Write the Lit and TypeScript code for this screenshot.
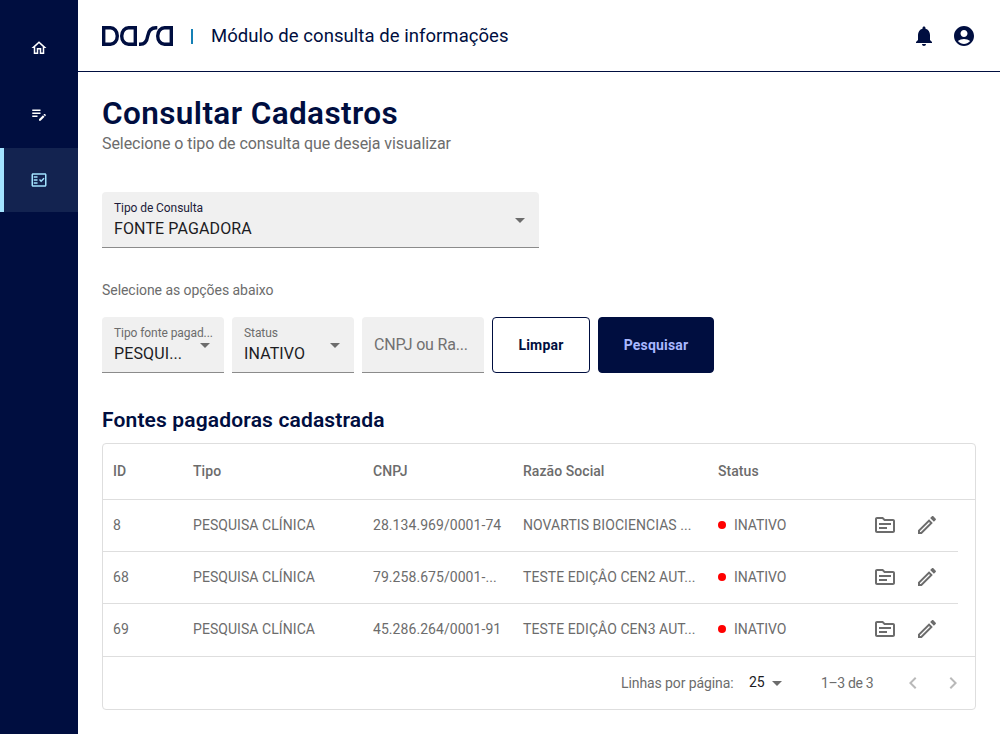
import { LitElement, html, css, svg } from "lit";
import { customElement, property } from "lit/decorators.js";
import { classMap } from "lit/directives/class-map.js";

const ICONS: Record<string, string> = {
  home: "M12 5.69l5 4.5V18h-2v-6H9v6H7v-7.81l5-4.5M12 3 2 12h3v8h6v-6h2v6h6v-8h3L12 3z",
  editNote:
    "M3 10h11v2H3v-2zm0-2h11V6H3v2zm0 8h7v-2H3v2zm15.01-3.13.71-.71c.39-.39 1.02-.39 1.41 0l.71.71c.39.39.39 1.02 0 1.41l-.71.71-2.12-2.12zm-.71.71-5.3 5.3V21h2.12l5.3-5.3-2.12-2.12z",
  factCheck:
    "M20 3H4c-1.1 0-2 .9-2 2v14c0 1.1.9 2 2 2h16c1.1 0 2-.9 2-2V5c0-1.1-.9-2-2-2zm0 16H4V5h16v14zM19.41 10.42 17.99 9l-3.17 3.17-1.41-1.42L12 12.16 14.82 15zM5 7h5v2H5zM5 11h5v2H5zM5 15h5v2H5z",
  bell: "M12 22c1.1 0 2-.9 2-2h-4c0 1.1.89 2 2 2zm6-6v-5c0-3.07-1.64-5.64-4.5-6.32V4c0-.83-.67-1.5-1.5-1.5s-1.5.67-1.5 1.5v.68C7.63 5.36 6 7.92 6 11v5l-2 2v1h16v-1l-2-2z",
  account:
    "M12 2C6.48 2 2 6.48 2 12s4.48 10 10 10 10-4.48 10-10S17.52 2 12 2zm0 4c1.93 0 3.5 1.57 3.5 3.5S13.93 13 12 13s-3.5-1.57-3.5-3.5S10.07 6 12 6zm0 14c-2.03 0-4.43-.82-6.14-2.88C7.55 15.8 9.68 15 12 15s4.45.8 6.14 2.12C16.43 19.18 14.03 20 12 20z",
  source:
    "M20 6h-8l-2-2H4c-1.1 0-1.99.9-1.99 2L2 18c0 1.1.9 2 2 2h16c1.1 0 2-.9 2-2V8c0-1.1-.9-2-2-2zm0 12H4V6h5.17l2 2H20v10zm-2-6H6v-2h12v2zm-4 4H6v-2h8v2z",
  edit: "M14.06 9.02l.92.92L5.92 19H5v-.92l9.06-9.06M17.66 3c-.25 0-.51.1-.7.29l-1.83 1.83 3.75 3.75 1.83-1.83c.39-.39.39-1.02 0-1.41l-2.34-2.34c-.2-.2-.45-.29-.71-.29zm-3.6 3.19L3 17.25V21h3.75L17.81 9.94l-3.75-3.75z",
  caret: "M7 10l5 5 5-5z",
  left: "M15.41 7.41 14 6l-6 6 6 6 1.41-1.41L10.83 12z",
  right: "M10 6 8.59 7.41 13.17 12l-4.58 4.59L10 18l6-6z",
};

@customElement("ui-icon")
export class UiIcon extends LitElement {
  @property() name = "home";
  static styles = css`
    :host { display: block; width: 24px; height: 24px; flex: none; }
    svg { display: block; width: 100%; height: 100%; fill: currentColor; }
  `;
  render() {
    return html`<svg viewBox="0 0 24 24">${svg`<path d=${ICONS[this.name]}></path>`}</svg>`;
  }
}

@customElement("select-field")
export class SelectField extends LitElement {
  @property() label = "";
  @property() value = "";
  @property() placeholder = "";
  static styles = css`
    :host { display: block; box-sizing: border-box; height: 56px; background: #f0f0f0;
      border-bottom: 1px solid #8b8b8b; border-radius: 4px 4px 0 0; color: #1c1c1f; }
    .box { display: flex; align-items: center; height: 55px; padding: 0 7px 0 12px; }
    .texts { flex: 1; min-width: 0; align-self: flex-start; padding-top: 8px; }
    .label { font-size: 12px; line-height: 16px; color: var(--label, #6c6c6c); letter-spacing: -0.08px;
      white-space: nowrap; margin-right: -24px; }
    .value { font-size: 16px; line-height: 26px; white-space: nowrap; letter-spacing: 0.12px; }
    .ph { font-size: 16px; line-height: 54px; color: #717171; white-space: nowrap; letter-spacing: -0.2px; }
    ui-icon { color: #6c6c6c; }
  `;
  render() {
    return html`<div class="box">
      ${this.placeholder
        ? html`<div class="ph">${this.placeholder}</div>`
        : html`<div class="texts">
              <div class="label">${this.label}</div>
              <div class="value">${this.value}</div>
            </div>
            <ui-icon name="caret"></ui-icon>`}
    </div>`;
  }
}

const NAV = ["home", "editNote", "factCheck"];
const ROWS = [
  ["8", "PESQUISA CLÍNICA", "28.134.969/0001-74", "NOVARTIS BIOCIENCIAS ..."],
  ["68", "PESQUISA CLÍNICA", "79.258.675/0001-...", "TESTE EDIÇÂO CEN2 AUT..."],
  ["69", "PESQUISA CLÍNICA", "45.286.264/0001-91", "TESTE EDIÇÂO CEN3 AUT..."],
];

@customElement("app-root")
export class AppRoot extends LitElement {
  static styles = css`
    :host { display: flex; height: 734px; background: #fff; color: #000e40; overflow: hidden;
      font-family: Roboto, "Liberation Sans", sans-serif; }
    * { box-sizing: border-box; }
    h1, h2, p { margin: 0; white-space: nowrap; }
    nav { width: 78px; flex: none; background: #000e40; padding-top: 16px; display: flex; flex-direction: column; gap: 2px; }
    .item { height: 64px; display: flex; align-items: center; justify-content: center; color: #fff; }
    .item ui-icon { width: 18px; height: 18px; }
    .active { background: #132350; color: #a3e3ff; border-left: 4px solid #a3e3ff; padding-right: 4px; }
    .page { flex: 1; min-width: 0; }
    header { height: 72px; border-bottom: 1px solid #000e40; padding: 0 24px; display: flex; align-items: center; }
    .logo { display: block; width: 71px; height: 20px; fill: none; stroke: #000e40; stroke-width: 3.4; }
    .bar { width: 2px; height: 15px; background: #1580b5; margin: 2px 18px 0 18px; }
    .title { font-size: 18.5px; line-height: 24px; letter-spacing: 0.05px; flex: 1; white-space: nowrap; }
    .tools { display: flex; gap: 16px; }
    main { padding: 24px; }
    h1 { font-size: 31.5px; line-height: 36px; font-weight: 600; letter-spacing: 0.4px; }
    .sub { font-size: 16px; line-height: 24px; color: #6c6c6c; letter-spacing: -0.07px; }
    .type { width: 437px; margin-top: 36px; --label: #1c1c3a; }
    .hint { font-size: 14px; line-height: 20px; color: #6c6c6c; margin-top: 32px; letter-spacing: -0.05px; }
    .filters { display: flex; gap: 8px; margin-top: 17px; }
    .filters select-field { width: 122px; }
    .btn { height: 56px; border: 1px solid #000e40; border-radius: 4px; font-size: 14px; font-weight: 700;
      letter-spacing: 0.2px; display: flex; align-items: center; justify-content: center; }
    .clear { width: 98px; }
    .search { width: 116px; background: #000e40; color: #a9b8ff; }
    h2 { font-size: 21px; line-height: 24px; font-weight: 600; letter-spacing: 0.15px; margin-top: 35px; }
    .table { margin-top: 11px; height: 267px; border: 1px solid #dedede; border-radius: 4px; color: #6c6c6c; font-size: 14px; }
    .row { display: grid; grid-template-columns: 80px 180px 150px 195px 140px 1fr; align-items: center; height: 52px;
      width: 855px; padding-bottom: 1px; border-bottom: 1px solid #dedede; letter-spacing: 0.06px; }
    .row > * { padding-left: 10px; white-space: nowrap; }
    .head { height: 56px; width: auto; font-weight: 500; padding-bottom: 2px; }
    .last { border-bottom: 0; padding-bottom: 2px; }
    .status { display: flex; align-items: center; gap: 8px; letter-spacing: -0.05px; }
    .dot { width: 8px; height: 8px; border-radius: 50%; background: #f00; }
    .acts { display: flex; gap: 18px; padding-left: 25px; }
    .foot { height: 54px; border-top: 1px solid #dedede; padding-bottom: 2px; display: flex; align-items: center; }
    .lpp { margin-left: 518px; width: 128px; letter-spacing: -0.1px; }
    .n { color: #1c1c1f; width: 16px; padding-bottom: 1px; }
    .foot .caret { margin-right: 32px; }
    .range { width: 80px; letter-spacing: -0.35px; }
    .pager { display: flex; gap: 16px; color: #b9b9b9; }
  `;
  render() {
    return html`
      <nav>${NAV.map((n, i) => html`<div class=${classMap({ item: true, active: i === 2 })}><ui-icon name=${n}></ui-icon></div>`)}</nav>
      <div class="page">
        <header>
          <svg class="logo" viewBox="0 0 71 20">
            <path d="M1.7 1.7H8.5A6.8 8.3 0 0 1 8.5 18.3H1.7Z"></path>
            <path d="M33.3 1.7H26.5A6.8 8.3 0 0 0 26.5 18.3H33.3Z"></path>
            <path d="M37 18.3H38C43 18.3 45 15 45.7 10C46.4 5 49 1.7 54 1.7H55.3"></path>
            <path d="M69.3 1.7H62.5A6.8 8.3 0 0 0 62.5 18.3H69.3Z"></path>
          </svg>
          <span class="bar"></span>
          <span class="title">Módulo de consulta de informações</span>
          <div class="tools"><ui-icon name="bell"></ui-icon><ui-icon name="account"></ui-icon></div>
        </header>
        <main>
          <h1>Consultar Cadastros</h1>
          <p class="sub">Selecione o tipo de consulta que deseja visualizar</p>
          <select-field class="type" label="Tipo de Consulta" value="FONTE PAGADORA"></select-field>
          <p class="hint">Selecione as opções abaixo</p>
          <div class="filters">
            <select-field label="Tipo fonte pagad..." value="PESQUI..."></select-field>
            <select-field label="Status" value="INATIVO"></select-field>
            <select-field placeholder="CNPJ ou Ra..."></select-field>
            <div class="btn clear">Limpar</div>
            <div class="btn search">Pesquisar</div>
          </div>
          <h2>Fontes pagadoras cadastrada</h2>
          <div class="table">
            <div class="row head"><span>ID</span><span>Tipo</span><span>CNPJ</span><span>Razão Social</span><span>Status</span></div>
            ${ROWS.map(
              (r, i) => html`<div class=${classMap({ row: true, last: i === 2 })}>
                ${r.map((c) => html`<span>${c}</span>`)}
                <span class="status"><i class="dot"></i><span>INATIVO</span></span>
                <span class="acts"><ui-icon name="source"></ui-icon><ui-icon name="edit"></ui-icon></span>
              </div>`
            )}
            <div class="foot">
              <span class="lpp">Linhas por página:</span><span class="n">25</span>
              <ui-icon class="caret" name="caret"></ui-icon>
              <span class="range">1–3 de 3</span>
              <div class="pager"><ui-icon name="left"></ui-icon><ui-icon name="right"></ui-icon></div>
            </div>
          </div>
        </main>
      </div>`;
  }
}
